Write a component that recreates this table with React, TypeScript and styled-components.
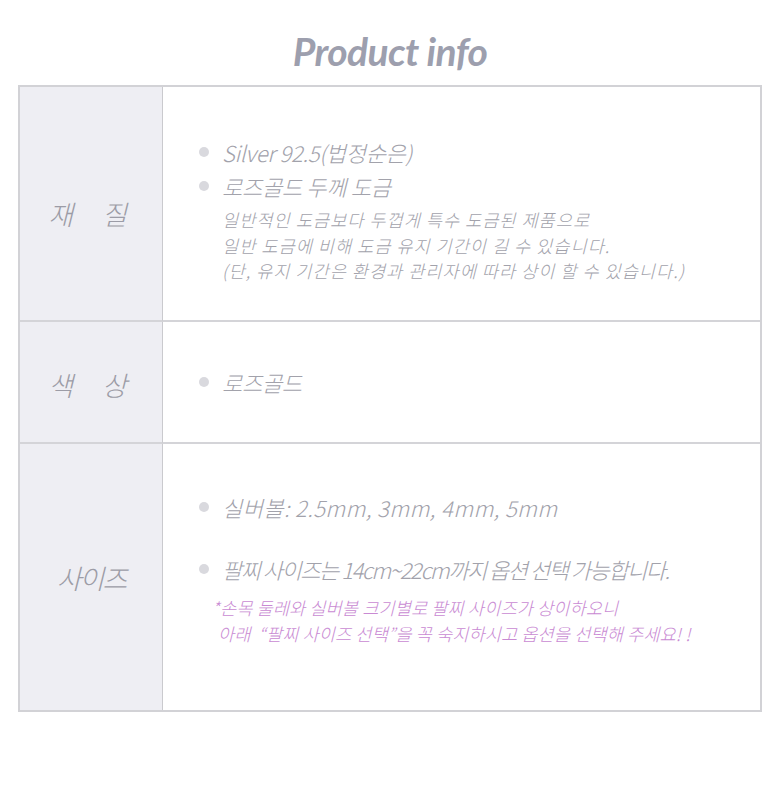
import React from 'react';
import styled, { createGlobalStyle } from 'styled-components';

const GlobalStyle = createGlobalStyle`
	html, body {
		margin: 0;
		padding: 0;
		background: #fff;
	}
	body {
		font-family: 'Noto Sans CJK KR', 'Noto Sans', sans-serif;
	}
`;

const Page = styled.div`
	width: 780px;
	height: 805px;
	background: #fff;
	box-sizing: border-box;
	padding: 0 18px;
`;

const Title = styled.h1`
	margin: 0;
	height: 85px;
	display: flex;
	align-items: center;
	justify-content: center;
	padding-top: 16px;
	box-sizing: border-box;
	font-family: 'Lato', 'Noto Sans', sans-serif;
	font-style: italic;
	font-weight: 700;
	font-size: 39px;
	letter-spacing: -0.6px;
	color: #9d9fae;
`;

const Table = styled.div`
	border: 2px solid #d2d2d6;
	display: grid;
	grid-template-columns: 143px 1fr;
`;

const Head = styled.div<{ $h: number; $last?: boolean; $shift?: number }>`
	height: ${(p) => p.$h}px;
	background: #eeeef3;
	border-right: 1px solid #cacace;
	border-bottom: ${(p) => (p.$last ? 'none' : '2px solid #d4d4d8')};
	box-sizing: border-box;
	display: flex;
	align-items: center;
	justify-content: center;
	padding-top: ${(p) => (p.$shift ?? 0) * 2}px;
	font-size: 27px;
	font-weight: 300;
	font-style: italic;
	color: #9c9ca6;
`;

const HeadText = styled.span<{ $wide?: boolean }>`
	letter-spacing: ${(p) => (p.$wide ? '29px' : '-2px')};
	padding-left: ${(p) => (p.$wide ? '22px' : '0')};
`;

const Cell = styled.div<{ $h: number; $last?: boolean; $top?: number }>`
	height: ${(p) => p.$h}px;
	border-bottom: ${(p) => (p.$last ? 'none' : '2px solid #d4d4d8')};
	box-sizing: border-box;
	display: flex;
	flex-direction: column;
	justify-content: ${(p) => (p.$top === undefined ? 'center' : 'flex-start')};
	padding-top: ${(p) => p.$top ?? 0}px;
	padding-left: 36px;
`;

const Item = styled.div<{ $gap?: number; $ls?: number }>`
	display: flex;
	align-items: center;
	height: 34px;
	margin-top: ${(p) => p.$gap ?? 0}px;
	font-size: 22px;
	font-style: italic;
	font-weight: 300;
	letter-spacing: ${(p) => p.$ls ?? -0.3}px;
	color: #a2a2ab;
	white-space: pre;
`;

const Dot = styled.span`
	width: 10px;
	height: 10px;
	border-radius: 50%;
	background: #d9d9de;
	margin-right: 13px;
	flex: none;
`;

const Sub = styled.div<{ $pink?: boolean; $gap?: number; $indent?: number }>`
	line-height: 25.5px;
	margin-top: ${(p) => p.$gap ?? 0}px;
	padding-left: ${(p) => p.$indent ?? 23}px;
	font-size: 17.6px;
	font-style: italic;
	font-weight: 300;
	letter-spacing: ${(p) => (p.$pink ? '0.1px' : '1px')};
	color: ${(p) => (p.$pink ? '#c98ad3' : '#a2a2ab')};
	white-space: pre;
`;

export default function App() {
	return (
		<Page>
			<GlobalStyle />
			<Title>Product info</Title>
			<Table>
				<Head $h={235} $shift={10}>
					<HeadText $wide>재질</HeadText>
				</Head>
				<Cell $h={235} $top={48}>
					<Item>
						<Dot />
						Silver 92.5(법정순은)
					</Item>
					<Item>
						<Dot />
						로즈골드 두께 도금
					</Item>
					<Sub $gap={4}>일반적인 도금보다 두껍게 특수 도금된 제품으로</Sub>
					<Sub>일반 도금에 비해 도금 유지 기간이 길 수 있습니다.</Sub>
					<Sub>(단, 유지 기간은 환경과 관리자에 따라 상이 할 수 있습니다.)</Sub>
				</Cell>

				<Head $h={122} $shift={2}>
					<HeadText $wide>색상</HeadText>
				</Head>
				<Cell $h={122}>
					<Item>
						<Dot />
						로즈골드
					</Item>
				</Cell>

				<Head $h={266} $last>
					<HeadText>사이즈</HeadText>
				</Head>
				<Cell $h={266} $last $top={46}>
					<Item $ls={0.4}>
						<Dot />
						실버볼: 2.5mm, 3mm, 4mm, 5mm
					</Item>
					<Item $gap={28} $ls={-1.5}>
						<Dot />
						팔찌 사이즈는 14cm~22cm까지 옵션 선택 가능합니다.
					</Item>
					<Sub $pink $gap={9} $indent={13}>*손목 둘레와 실버볼 크기별로 팔찌 사이즈가 상이하오니</Sub>
					<Sub $pink $indent={19}>아래  “팔찌 사이즈 선택”을 꼭 숙지하시고 옵션을 선택해 주세요! !</Sub>
				</Cell>
			</Table>
		</Page>
	);
}
